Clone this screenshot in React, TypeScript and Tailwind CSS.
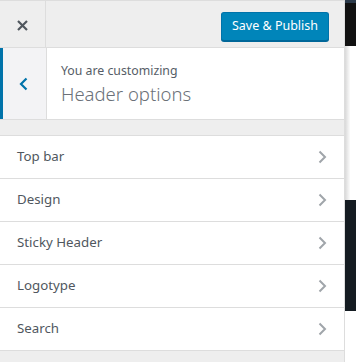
const sections = ['Top bar', 'Design', 'Sticky Header', 'Logotype', 'Search']

function Chevron({ dir, className }: { dir: 'left' | 'right'; className?: string }) {
  return (
    <svg width="9" height="14" viewBox="0 0 9 14" className={className}>
      <path
        d={dir === 'right' ? 'M1.5 1.5 L7 7 L1.5 12.5' : 'M7.5 1.5 L2 7 L7.5 12.5'}
        fill="none"
        stroke="currentColor"
        strokeWidth={dir === 'right' ? 2 : 2.2}
      />
    </svg>
  )
}

export default function App() {
  return (
    <div className="flex w-[356px] h-[362px] overflow-hidden bg-white font-['Noto_Sans',sans-serif]">
      {/* Customizer panel */}
      <div className="w-[345px] shrink-0 flex flex-col bg-[#eee] border-r border-[#ddd]">
        {/* Header */}
        <div className="flex h-[48px] border-t border-b border-[#ddd]">
          <button className="w-[46px] flex items-center justify-center border-r border-[#ddd] text-[#50575e]">
            <svg width="11" height="11" viewBox="0 0 11 11" className="mt-[2px]">
              <path d="M1 1 L10 10 M10 1 L1 10" stroke="currentColor" strokeWidth="2.2" />
            </svg>
          </button>
          <div className="flex-1 flex justify-end pt-[11px] pr-[15px]">
            <button className="h-[29px] w-[108px] rounded-[3px] bg-[#0085ba] border border-[#0073aa] border-b-[#006799] shadow-[0_1px_0_#006799] text-white text-[12.5px] leading-none">
              Save &amp; Publish
            </button>
          </div>
        </div>

        {/* Section title */}
        <div className="flex h-[72px] border-b border-[#ddd]">
          <div className="w-[47px] flex items-center justify-center bg-[#f3f3f5] border-l-[3px] border-[#0073aa] border-r border-r-[#ddd] text-[#0073aa]">
            <Chevron dir="left" className="mt-[1px] -ml-[2px]" />
          </div>
          <div className="flex-1 bg-white pl-[14px] pt-[14px]">
            <div className="text-[12.3px] leading-[18px] text-[#555d66]">You are customizing</div>
            <div className="text-[18.5px] leading-[28px] font-light text-[#6b7178]">Header options</div>
          </div>
        </div>

        {/* Sections */}
        <div className="mt-[15px] border-t border-[#ddd]">
          {sections.map((s) => (
            <div key={s} className="flex items-center justify-between h-[43px] bg-white border-b border-[#ddd] pl-[17px] pr-[17px]">
              <span className="text-[13.3px] text-[#50575e]">{s}</span>
              <Chevron dir="right" className="text-[#a0a5aa]" />
            </div>
          ))}
        </div>
      </div>

      {/* Preview strip */}
      <div className="flex-1 flex flex-col">
        <div className="h-[3px] bg-[#2b3a4a]" />
        <div className="h-[43px] bg-[#111]" />
        <div className="h-[154px] bg-gradient-to-r from-[#d9d9d9] via-white to-white" />
        <div className="h-[111px] bg-[#151c22]" />
        <div className="flex-1 bg-white" />
      </div>
    </div>
  )
}
